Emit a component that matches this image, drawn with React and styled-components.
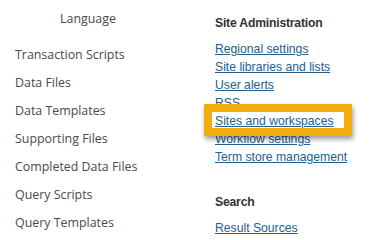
import React from "react";
import styled, { createGlobalStyle } from "styled-components";

const Global = createGlobalStyle`
  html, body { margin: 0; padding: 0; background: #ffffff; }
  body { width: 386px; height: 239px; overflow: hidden; }
`;

const Page = styled.div`
  display: flex;
  width: 386px;
  height: 239px;
  background: #fff;
`;

const LeftColumn = styled.div`
  width: 176px;
  display: flex;
  flex-direction: column;
  padding-top: 5px;
  font-family: "Open Sans", "Noto Sans", sans-serif;
  font-size: 12.4px;
  color: #4a4a4a;
`;

const LeftHeading = styled.div`
  text-align: center;
  line-height: 28px;
  margin-bottom: 8px;
`;

const LeftItem = styled.div`
  line-height: 28px;
  padding-left: 15px;
  white-space: nowrap;
`;

const RightColumn = styled.div`
  margin-left: 39px;
  display: flex;
  flex-direction: column;
  padding-top: 14px;
  font-family: "Liberation Sans", Arial, sans-serif;
  font-size: 12.2px;
`;

const Section = styled.div`
  display: flex;
  flex-direction: column;
  margin-bottom: ${(p) => p.$gap || 0}px;
`;

const SectionTitle = styled.div`
  font-weight: bold;
  color: #333;
  line-height: 18px;
  margin-bottom: 8px;
  letter-spacing: -0.2px;
`;

const LinkRow = styled.div`
  position: relative;
  line-height: 18px;
  white-space: nowrap;
  z-index: ${(p) => (p.$highlight ? 2 : 1)};
`;

const Link = styled.a`
  color: #22608f;
  text-decoration: underline;
  cursor: pointer;
`;

const Highlight = styled.div`
  position: absolute;
  left: -11px;
  top: -8px;
  width: 132px;
  height: 16px;
  border: 8px solid #f2ac0e;
  background: #fff;
  box-shadow: 1px 3px 5px rgba(0, 0, 0, 0.4);
  z-index: -1;
`;

const left = [
  "Transaction Scripts",
  "Data Files",
  "Data Templates",
  "Supporting Files",
  "Completed Data Files",
  "Query Scripts",
  "Query Templates",
];

const admin = [
  "Regional settings",
  "Site libraries and lists",
  "User alerts",
  "RSS",
  "Sites and workspaces",
  "Workflow settings",
  "Term store management",
];

export default function App() {
  return (
    <>
      <Global />
      <Page>
        <LeftColumn>
          <LeftHeading>Language</LeftHeading>
          {left.map((t) => (
            <LeftItem key={t}>{t}</LeftItem>
          ))}
        </LeftColumn>
        <RightColumn>
          <Section $gap={27}>
            <SectionTitle>Site Administration</SectionTitle>
            {admin.map((t) => (
              <LinkRow key={t} $highlight={t === "Sites and workspaces"}>
                {t === "Sites and workspaces" && <Highlight />}
                <Link>{t}</Link>
              </LinkRow>
            ))}
          </Section>
          <Section>
            <SectionTitle>Search</SectionTitle>
            <LinkRow>
              <Link>Result Sources</Link>
            </LinkRow>
          </Section>
        </RightColumn>
      </Page>
    </>
  );
}
